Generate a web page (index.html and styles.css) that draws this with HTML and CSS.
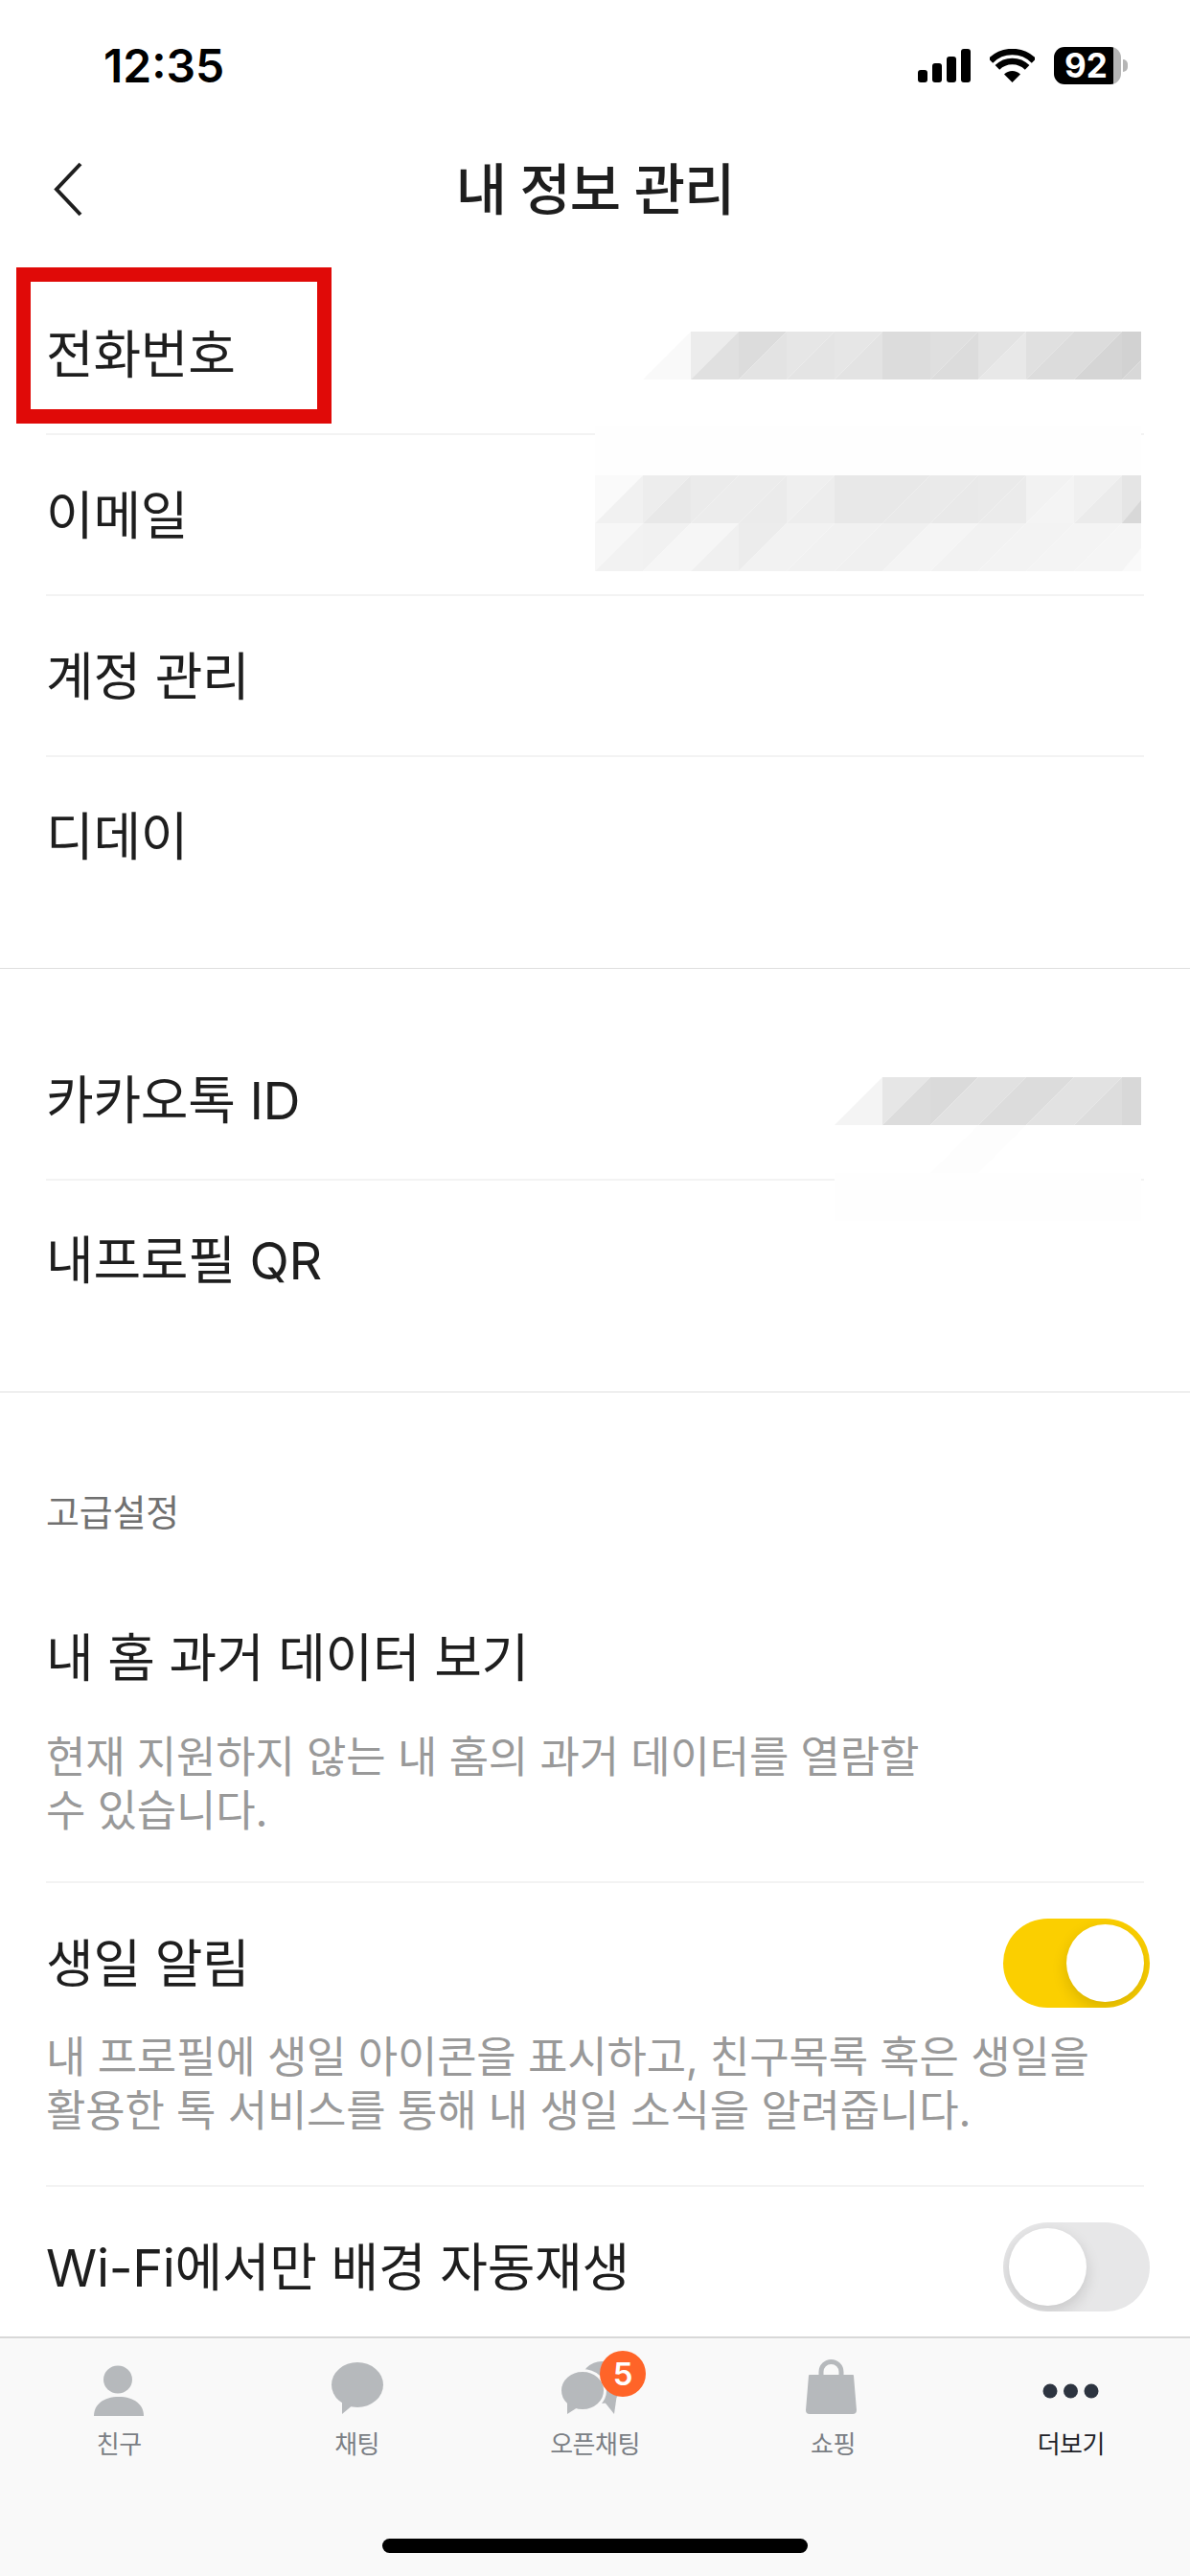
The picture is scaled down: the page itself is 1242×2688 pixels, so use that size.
FILE: index.html
```html
<!DOCTYPE html>
<html lang="ko">
<head>
  <meta charset="UTF-8">
  <meta name="viewport" content="width=device-width, initial-scale=1.0">
  <title>내 정보 관리</title>
  <link rel="stylesheet" href="styles.css">
</head>
<body>
  <div class="screen">
    <div class="status-bar">
      <span class="clock">12:35</span>
      <div class="status-icons">
        <svg class="signal" width="55" height="35" viewBox="0 0 55 35" fill="#000">
          <rect x="0" y="22" width="10" height="13" rx="3"/>
          <rect x="15" y="15" width="10" height="20" rx="3"/>
          <rect x="30" y="8" width="10" height="27" rx="3"/>
          <rect x="45" y="0" width="10" height="35" rx="3"/>
        </svg>
        <svg class="wifi" width="47" height="35" viewBox="0 0 47 35">
          <path d="M.9 12.4A32 32 0 0 1 46.1 12.4" fill="none" stroke="#000" stroke-width="6.5"/>
          <path d="M7.9 19.4A22 22 0 0 1 39.1 19.4" fill="none" stroke="#000" stroke-width="6.5"/>
          <path d="M23.5 35L15 26.5A12 12 0 0 1 32 26.5z" fill="#000"/>
        </svg>
        <div class="battery">92</div>
      </div>
    </div>

    <header class="top-bar">
      <svg class="back" width="32" height="57" viewBox="0 0 32 57">
        <path d="M29 2L4 28.5L29 55" fill="none" stroke="#1e1e1e" stroke-width="4"/>
      </svg>
      <h1>내 정보 관리</h1>
    </header>

    <main class="content">
      <section class="group">
        <div class="row">
          <span class="row-title">전화번호</span>
          <svg class="mosaic mosaic-phone" width="520" height="50" viewBox="0 0 520 50">
            <path fill="#f9f9f9" d="M0 50l50-50v50z"/>
            <path fill="#ececec" d="M50 0h50l-50 50z"/><path fill="#e0e0e0" d="M50 50l50-50v50z"/>
            <path fill="#dcdcdc" d="M100 0h50l-50 50z"/><path fill="#e3e3e3" d="M100 50l50-50v50z"/>
            <path fill="#e6e6e6" d="M150 0h50l-50 50z"/><path fill="#e4e4e4" d="M150 50l50-50v50z"/>
            <path fill="#e6e6e6" d="M200 0h50l-50 50z"/><path fill="#e3e3e3" d="M200 50l50-50v50z"/>
            <path fill="#dcdcdc" d="M250 0h50v50h-50z"/>
            <path fill="#dfdfdf" d="M300 0h50l-50 50z"/><path fill="#dcdcdc" d="M300 50l50-50v50z"/>
            <path fill="#e3e3e3" d="M350 0h50l-50 50z"/><path fill="#e8e8e8" d="M350 50l50-50v50z"/>
            <path fill="#e0e0e0" d="M400 0h50l-50 50z"/><path fill="#dcdcdc" d="M400 50l50-50v50z"/>
            <path fill="#dcdcdc" d="M450 0h50l-50 50z"/><path fill="#d5d5d5" d="M450 50l50-50v50z"/>
            <path fill="#d2d2d2" d="M500 0h50l-50 50z"/><path fill="#d8d8d8" d="M500 50l50-50v50z"/>
          </svg>
          <div class="highlight"></div>
        </div>
        <div class="row">
          <span class="row-title">이메일</span>
          <svg class="mosaic mosaic-email" width="570" height="151" viewBox="0 0 570 151">
            <rect width="570" height="51" fill="#fefefe"/>
            <g transform="translate(0 51)">
              <path fill="#fafafa" d="M0 0h50l-50 50z"/><path fill="#f1f1f1" d="M0 50l50-50v50z"/>
              <path fill="#ededed" d="M50 0h50l-50 50z"/><path fill="#e8e8e8" d="M50 50l50-50v50z"/>
              <path fill="#ebebeb" d="M100 0h50l-50 50z"/><path fill="#ececec" d="M100 50l50-50v50z"/>
              <path fill="#ececec" d="M150 0h50l-50 50z"/><path fill="#ebebeb" d="M150 50l50-50v50z"/>
              <path fill="#efefef" d="M200 0h50l-50 50z"/><path fill="#ededed" d="M200 50l50-50v50z"/>
              <path fill="#e8e8e8" d="M250 0h50v50h-50z"/>
              <path fill="#e8e8e8" d="M300 0h50l-50 50z"/><path fill="#e9e9e9" d="M300 50l50-50v50z"/>
              <path fill="#eaeaea" d="M350 0h50l-50 50z"/><path fill="#e9e9e9" d="M350 50l50-50v50z"/>
              <path fill="#eaeaea" d="M400 0h50l-50 50z"/><path fill="#ebebeb" d="M400 50l50-50v50z"/>
              <path fill="#f2f2f2" d="M450 0h50l-50 50z"/><path fill="#f4f4f4" d="M450 50l50-50v50z"/>
              <path fill="#f0f0f0" d="M500 0h50l-50 50z"/><path fill="#ebebeb" d="M500 50l50-50v50z"/>
              <path fill="#e5e5e5" d="M550 0h50v50h-50z"/><path fill="#d8d8d8" d="M550 50l20-24v24z"/>
            </g>
            <g transform="translate(0 101)">
              <path fill="#f7f7f7" d="M0 0h50l-50 50z"/><path fill="#f2f2f2" d="M0 50l50-50v50z"/>
              <path fill="#f1f1f1" d="M50 0h50l-50 50z"/><path fill="#f6f6f6" d="M50 50l50-50v50z"/>
              <path fill="#f6f6f6" d="M100 0h50l-50 50z"/><path fill="#f0f0f0" d="M100 50l50-50v50z"/>
              <path fill="#ececec" d="M150 0h50l-50 50z"/><path fill="#f2f2f2" d="M150 50l50-50v50z"/>
              <path fill="#f2f2f2" d="M200 0h50l-50 50z"/><path fill="#f1f1f1" d="M200 50l50-50v50z"/>
              <path fill="#f1f1f1" d="M250 0h50l-50 50z"/><path fill="#f0f0f0" d="M250 50l50-50v50z"/>
              <path fill="#f0f0f0" d="M300 0h50l-50 50z"/><path fill="#f4f4f4" d="M300 50l50-50v50z"/>
              <path fill="#f5f5f5" d="M350 0h50l-50 50z"/><path fill="#f2f2f2" d="M350 50l50-50v50z"/>
              <path fill="#f2f2f2" d="M400 0h50l-50 50z"/><path fill="#f3f3f3" d="M400 50l50-50v50z"/>
              <path fill="#f3f3f3" d="M450 0h50l-50 50z"/><path fill="#f4f4f4" d="M450 50l50-50v50z"/>
              <path fill="#f4f4f4" d="M500 0h50l-50 50z"/><path fill="#f5f5f5" d="M500 50l50-50v50z"/>
              <path fill="#f5f5f5" d="M550 0h50v50h-50z"/><path fill="#fafafa" d="M550 50l20-24v24z"/>
            </g>
          </svg>
        </div>
        <div class="row">
          <span class="row-title">계정 관리</span>
        </div>
        <div class="row row-last">
          <span class="row-title">디데이</span>
        </div>
      </section>

      <section class="group">
        <div class="row">
          <span class="row-title">카카오톡 ID</span>
          <svg class="mosaic mosaic-kakao" width="320" height="150" viewBox="0 0 320 150">
            <path fill="#f4f4f4" d="M0 50l50-50v50z"/>
            <path fill="#e6e6e6" d="M50 0h50l-50 50z"/><path fill="#dcdcdc" d="M50 50l50-50v50z"/>
            <path fill="#dadada" d="M100 0h50l-50 50z"/><path fill="#e1e1e1" d="M100 50l50-50v50z"/>
            <path fill="#e1e1e1" d="M150 0h50l-50 50z"/><path fill="#dcdcdc" d="M150 50l50-50v50z"/>
            <path fill="#dcdcdc" d="M200 0h50l-50 50z"/><path fill="#e2e2e2" d="M200 50l50-50v50z"/>
            <path fill="#e2e2e2" d="M250 0h50l-50 50z"/><path fill="#dddddd" d="M250 50l50-50v50z"/>
            <path fill="#d8d8d8" d="M300 0h20v50h-20z"/>
            <path fill="#fdfdfd" d="M100 100l50-50h50l-50 50z"/>
            <rect y="100" width="320" height="50" fill="#fefefe"/>
          </svg>
        </div>
        <div class="row row-last">
          <span class="row-title">내프로필 QR</span>
        </div>
      </section>

      <section class="group group-advanced">
        <div class="group-label">고급설정</div>
        <div class="setting setting-history">
          <div class="setting-head">
            <span class="row-title">내 홈 과거 데이터 보기</span>
          </div>
          <p class="setting-desc">현재 지원하지 않는 내 홈의 과거 데이터를 열람할<br>수 있습니다.</p>
        </div>
        <div class="setting setting-birthday">
          <div class="setting-head">
            <span class="row-title">생일 알림</span>
            <div class="toggle toggle-on"><span class="knob"></span></div>
          </div>
          <p class="setting-desc">내 프로필에 생일 아이콘을 표시하고, 친구목록 혹은 생일을<br>활용한 톡 서비스를 통해 내 생일 소식을 알려줍니다.</p>
        </div>
        <div class="setting setting-wifi">
          <div class="setting-head">
            <span class="row-title">Wi-Fi에서만 배경 자동재생</span>
            <div class="toggle"><span class="knob"></span></div>
          </div>
        </div>
      </section>
    </main>

    <nav class="tab-bar">
      <a class="tab">
        <svg width="64" height="64" viewBox="0 0 64 64" fill="#b6b9bc">
          <ellipse cx="31" cy="23" rx="15" ry="14.5"/>
          <path d="M6 61c0-12 10-20 26-20s26 8 26 20z"/>
        </svg>
        <span>친구</span>
      </a>
      <a class="tab">
        <svg width="64" height="64" viewBox="0 0 64 64" fill="#b6b9bc">
          <ellipse cx="32" cy="28.5" rx="27" ry="23.5"/>
          <path d="M16 44V59L28 49z"/>
        </svg>
        <span>채팅</span>
      </a>
      <a class="tab">
        <svg width="80" height="64" viewBox="0 0 80 64" fill="#b6b9bc">
          <ellipse cx="47" cy="26" rx="22" ry="22"/>
          <path d="M48 44L60 59L63 38z"/>
          <ellipse cx="27" cy="34.5" rx="23.5" ry="21" stroke="#f9f9f9" stroke-width="3"/>
          <path d="M11 46V59L22 52z"/>
        </svg>
        <span>오픈채팅</span>
        <span class="badge">5</span>
      </a>
      <a class="tab">
        <svg width="64" height="64" viewBox="0 0 64 64" fill="#b6b9bc">
          <path d="M20 20V15a10.5 10.5 0 0 1 21 0V20" fill="none" stroke="#b6b9bc" stroke-width="5"/>
          <path d="M8 18H53a1 1 0 0 1 1 1L57 55a4 4 0 0 1-4 4H8a4 4 0 0 1-4-4L7 19a1 1 0 0 1 1-1z"/>
        </svg>
        <span>쇼핑</span>
      </a>
      <a class="tab tab-active">
        <svg width="64" height="64" viewBox="0 0 64 64" fill="#2d3440">
          <circle cx="10" cy="35" r="7.5"/>
          <circle cx="31.5" cy="35" r="7.5"/>
          <circle cx="53" cy="35" r="7.5"/>
        </svg>
        <span>더보기</span>
      </a>
      <div class="home-indicator"></div>
    </nav>
  </div>
</body>
</html>
```

FILE: styles.css
```css
* {
  box-sizing: border-box;
}

body {
  margin: 0;
  background-color: #fff;
  color: #1e1e1e;
  font-family: Inter, "Noto Sans CJK KR", sans-serif;
}

.screen {
  display: flex;
  flex-direction: column;
  width: 1242px;
  height: 2688px;
  overflow: hidden;
}

/* status bar */
.status-bar {
  display: flex;
  flex: none;
  align-items: center;
  justify-content: space-between;
  height: 108px;
  padding: 28px 72px 0 108px;
}
.clock {
  font-size: 48px;
  font-weight: 600;
  color: #000;
}
.status-icons {
  display: flex;
  align-items: center;
}
.wifi {
  margin: 0 20px;
}
.battery {
  position: relative;
  width: 70px;
  height: 39px;
  border-radius: 11px;
  background: linear-gradient(90deg, #000 62px, #b5b5b5 62px);
  color: #fff;
  font-size: 35px;
  font-weight: 700;
  line-height: 39px;
  padding-left: 11px;
}
.battery::after {
  content: "";
  position: absolute;
  top: 13px;
  right: -7px;
  width: 5px;
  height: 13px;
  border-radius: 0 6px 6px 0;
  background-color: #b5b5b5;
}

/* header */
.top-bar {
  display: grid;
  flex: none;
  grid-template-columns: 1fr auto 1fr;
  align-items: center;
  height: 178px;
  padding-left: 55px;
}
.top-bar h1 {
  margin: 0;
  padding: 0 55px 6px 0;
  font-size: 58px;
  font-weight: 500;
  letter-spacing: -1px;
}

/* rows */
.content {
  flex: 1;
  min-height: 0;
}
.group {
  padding-bottom: 52px;
  border-bottom: 1px solid #dedede;
}
.group + .group {
  padding-top: 53px;
}
.row {
  position: relative;
  display: flex;
  align-items: center;
  height: 168px;
  margin: 0 48px;
  border-bottom: 2px solid #f3f3f3;
}
.row-last {
  border-bottom: 0;
}
.row-title {
  padding-bottom: 6px;
  font-size: 54px;
  letter-spacing: -0.3px;
}
.row-last .row-title {
  padding-bottom: 9px;
}
.mosaic {
  position: absolute;
  right: 3px;
  display: block;
}
.mosaic-phone {
  top: 60px;
}
.mosaic-email {
  top: -9px;
}
.mosaic-kakao {
  top: 60px;
}
.highlight {
  position: absolute;
  top: -7px;
  left: -31px;
  width: 329px;
  height: 163px;
  border: 15px solid #e00a08;
}

/* advanced settings */
.group-advanced {
  border-bottom: 0;
}
.group-advanced.group {
  padding-top: 0;
}
.group-label {
  padding: 100px 48px 0;
  font-size: 38px;
  line-height: 50px;
  color: #707070;
  letter-spacing: -0.2px;
}
.setting {
  margin: 0 48px;
  border-bottom: 2px solid #f3f3f3;
}
.setting-history {
  padding-top: 80px;
  height: 362px;
}
.setting-birthday {
  padding-top: 37px;
  height: 317px;
}
.setting-wifi {
  padding-top: 37px;
  border-bottom: 0;
}
.setting-head {
  display: flex;
  align-items: center;
  justify-content: space-between;
  height: 93px;
  margin-right: -6px;
}
.setting-desc {
  margin: 24px 0 0;
  font-size: 45px;
  line-height: 56px;
  color: #999;
  letter-spacing: -0.2px;
}
.setting-history .setting-desc {
  margin-top: 30px;
}

.toggle {
  position: relative;
  flex: none;
  width: 153px;
  height: 93px;
  padding: 6px;
  border-radius: 47px;
  background-color: #e7e7e8;
  overflow: hidden;
}
.toggle-on {
  display: flex;
  justify-content: flex-end;
  background-color: #fbcf00;
}
.knob {
  display: block;
  width: 81px;
  height: 81px;
  border-radius: 50%;
  background-color: #fff;
  box-shadow: 0 6px 16px rgba(0, 0, 0, 0.14);
}

/* bottom tabs */
.tab-bar {
  position: relative;
  display: grid;
  flex: none;
  grid-template-columns: repeat(5, 1fr);
  height: 250px;
  border-top: 2px solid #d8d8d8;
  background-color: #f9f9f9;
}
.tab {
  position: relative;
  display: flex;
  flex-direction: column;
  align-items: center;
  padding-top: 20px;
  font-size: 26px;
  color: #7b7f85;
}
.tab span {
  margin-top: 8px;
  line-height: 38px;
  letter-spacing: -0.5px;
}
.tab-active {
  color: #1f2329;
}
.tab .badge {
  position: absolute;
  top: 13px;
  left: calc(50% + 5px);
  width: 48px;
  height: 48px;
  margin: 0;
  border-radius: 50%;
  background-color: #ff6428;
  color: #fff;
  font-size: 33px;
  font-weight: 600;
  line-height: 48px;
  text-align: center;
}
.home-indicator {
  position: absolute;
  bottom: 24px;
  left: 399px;
  width: 444px;
  height: 15px;
  border-radius: 8px;
  background-color: #000;
}
```
